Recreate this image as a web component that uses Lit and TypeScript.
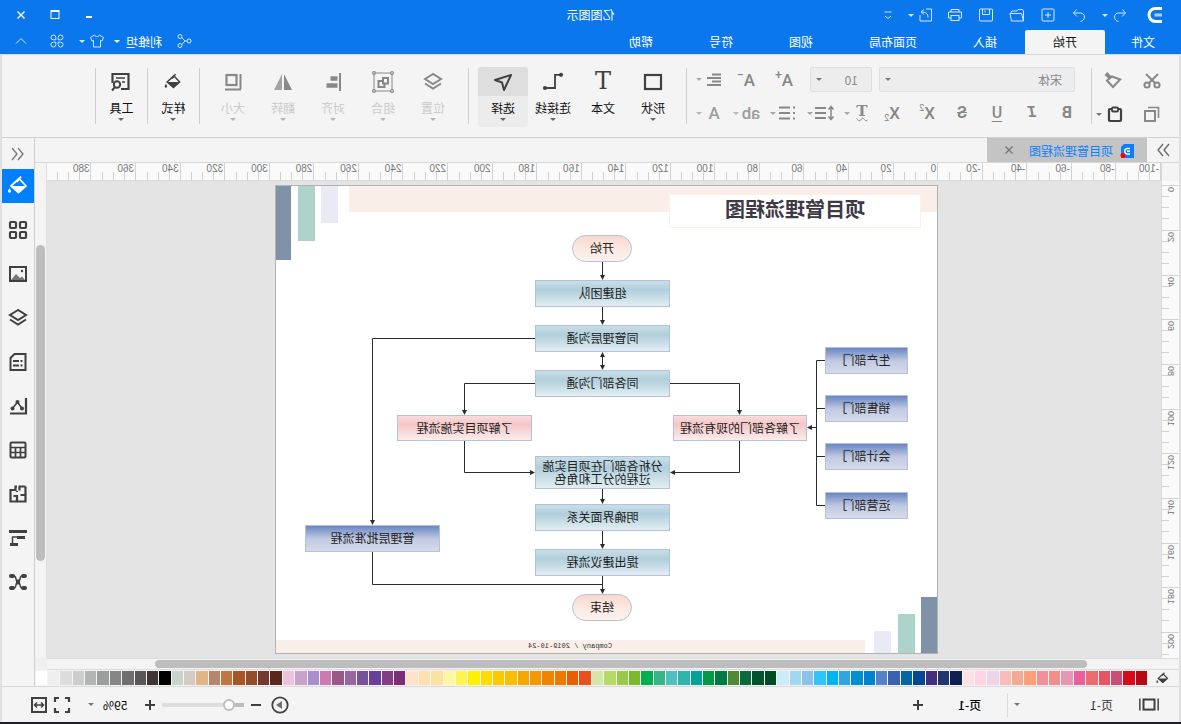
import { LitElement, html, css, svg, nothing } from "lit";
import { customElement, property, state } from "lit/decorators.js";
import { classMap } from "lit/directives/class-map.js";
import { styleMap } from "lit/directives/style-map.js";

const ICONS: Record<string, unknown> = {
  logo: svg`<path d="M1 1.5h6.5a6.5 6.5 0 0 1 0 13H1" fill="none" stroke="#fff" stroke-width="3"/><path d="M1 8h7.5" stroke="#a6cffa" stroke-width="3"/>`,
  undo: svg`<path d="M5.5 2.5 2.5 6l3.500 3.500M2.500 6h7c2.500 0 4 1.800 4 4s-1.500 4-4 4.500"/>`,
  redo: svg`<path d="M10.500 2.500 13.500 6l-3.500 3.500M13.500 6h-7c-2.500 0-4 1.800-4 4s1.500 4 4 4.500"/>`,
  fresh: svg`<rect x="2" y="2" width="12" height="12" rx="1"/><path d="M8 5v6M5 8h6"/>`,
  open: svg`<path d="M1.500 13.500V4l1-1.500h4.500l1 1.500h5l1 1v1.500"/><path d="M3.500 6.500h11.500l-1.500 7.500h-12z"/>`,
  save: svg`<rect x="1.500" y="2" width="13" height="12" rx="1"/><path d="M4.500 2v5.500h7V2M9 3.500v2"/>`,
  print: svg`<path d="M4 5V2.500h8V5M4 11H1.500V5h13v6H12"/><rect x="4" y="8.500" width="8" height="5"/>`,
  exportTo: svg`<path d="M8 2H2.500v12H14V8M6 10.500c0-4 2.500-5.500 6.500-5.500M10 2.500 13 5l-3 2.500"/>`,
  custom: svg`<path d="M4.500 5h7M5 9l3 2.500 3-2.500"/>`,
  min: svg`<path d="M5 10h6" stroke-width="2"/>`,
  max: svg`<rect x="4" y="3.500" width="8" height="8"/><path d="M4 4.500h8"/>`,
  close: svg`<path d="M4.500 4.500l7 7M11.500 4.500l-7 7" stroke-width="1.400"/>`,
  share: svg`<circle cx="3" cy="8" r="2"/><circle cx="12" cy="3.500" r="2"/><circle cx="12" cy="12.500" r="2"/><path d="M5 8h2l3.200-3.500M7 8l3.200 3.500"/>`,
  shirt: svg`<path d="M5.500 2 1.500 4.500 3 8l1.500-.5V14h7V7.500L13 8l1.500-3.500-4-2.500c-1 2-4 2-5 0z"/>`,
  apps: svg`<path d="M6.800 6.800V4.400a2.400 2.400 0 1 0-2.400 2.400zM9.200 6.800V4.400a2.400 2.400 0 1 1 2.400 2.400zM6.800 9.200v2.400a2.400 2.400 0 1 1-2.400-2.400zM9.200 9.200v2.400a2.400 2.400 0 1 0 2.400-2.400z"/>`,
  up: svg`<path d="M3 10.500l5-5 5 5"/>`,
  cut: svg`<g stroke-width="2"><circle cx="5" cy="14" r="2.600"/><circle cx="15" cy="14" r="2.600"/><path d="M4 3l9.500 9.500M16 3l-9.500 9.500"/></g>`,
  painter: svg`<path d="M13 6.500 4.800 9.500 12 17l6-6.500z" stroke-width="2"/><path d="M14.500 5.500l3-3.500 3 3-3.500 3 1 3.500-5.500-5.500z" fill="currentColor" stroke="none"/>`,
  copy: svg`<path d="M14 3.500H3.500V14" stroke-width="1.600"/><rect x="7" y="7" width="10" height="10" stroke-width="2"/>`,
  paste: svg`<rect x="4" y="5" width="12" height="12" rx="1" stroke-width="2.200"/><rect x="7" y="3.500" width="6" height="4" rx="1" stroke-width="1.800" fill="#f4f4f4"/>`,
  alignText: svg`<path d="M3 4.500h9M3 8h14M3 11.500h9M3 15h14" stroke-width="2"/>`,
  lineGap: svg`<path d="M9 5h11M9 10h11M9 15h11" stroke-width="2"/><path d="M4 4v12M1.500 6.500 4 3.500l2.500 3M1.500 13.500 4 16.500l2.500-3" stroke-width="1.500"/>`,
  bullets: svg`<path d="M8 4.500h11M8 10h11M8 15.500h11" stroke-width="2"/><path d="M3 4.500h2M3 10h2M3 15.500h2" stroke-width="2"/>`,
  shape: svg`<rect x="4" y="5" width="16" height="14" stroke-width="2.200"/>`,
  connector: svg`<path d="M20 4.800h-6V18H4" stroke-width="1.800" transform="matrix(-1 0 0 1 24 0)"/><circle cx="4" cy="4.800" r="2.100" fill="currentColor" stroke="none"/><circle cx="20" cy="18" r="2.100" fill="currentColor" stroke="none"/>`,
  pointer: svg`<path d="M4 5l16 5-7 2.500L11 20z" stroke-width="2" stroke-linejoin="round"/>`,
  layers: svg`<path d="M12 4l8 5-8 5-8-5zM4 13.500 12 18.500l8-5" stroke-width="2"/>`,
  group: svg`<rect x="3" y="3" width="18" height="18" stroke-width="1"/><path d="M12 8h5v5.500h-5zM12 11H7.500v6h6v-3.500" stroke-width="2" transform="matrix(-1 0 0 1 24 0)"/><g fill="#f4f4f4" stroke-width="1.200"><circle cx="3" cy="3" r="1.400"/><circle cx="21" cy="3" r="1.400"/><circle cx="3" cy="21" r="1.400"/><circle cx="21" cy="21" r="1.400"/></g>`,
  align: svg`<path d="M5 3v18" stroke-width="2"/><path d="M7.500 8.500h7M7.500 15.500h11" stroke-width="4.500"/>`,
  flip: svg`<path d="M11 4v16H3z" fill="currentColor" stroke="none"/><path d="M13 4v16h8z" fill="currentColor" stroke="none" opacity=".75"/>`,
  size: svg`<rect x="8.500" y="5" width="10" height="10" stroke-width="2.200"/><path d="M4.500 4v15M4 19.500h16" stroke-width="2"/>`,
  bucket: svg`<path d="M4 12 11 4.500 19 12l-7.500 6.500z" stroke-width="1.800"/><path d="M4 12h15l-7.500 7z" fill="currentColor" stroke="none"/><path d="M13 8 9 2.500" stroke-width="1.800"/><path d="M20.500 14l1.300 2.600a1.500 1.500 0 1 1-2.600 0z" fill="currentColor" stroke="none"/>`,
  tools: svg`<path d="M12 19H4.500V4h16v9" stroke-width="2.200"/><path d="M8 8h9M8 12h3" stroke-width="1.600"/><circle cx="16" cy="14.500" r="3.200" stroke-width="2"/><path d="M18 17l3 3.500" stroke-width="2"/>`,
  next: svg`<path d="M4 4l5 6-5 6M10 4l5 6-5 6" stroke-width="1.300"/>`,
  prev: svg`<path d="M10 4 5 10l5 6M16 4l-5 6 5 6" stroke-width="1.300"/>`,
  grid: svg`<g stroke-width="2.200"><rect x="4" y="4" width="6" height="6" rx="1"/><rect x="14" y="4" width="6" height="6" rx="1"/><rect x="4" y="14" width="6" height="6" rx="1"/><rect x="14" y="14" width="6" height="6" rx="1"/></g>`,
  image: svg`<rect x="4" y="5" width="16" height="14" stroke-width="2"/><path d="M5 18l3-3.500 2 1.500 4-4 5 6z" fill="#777" stroke="none"/><circle cx="8" cy="9" r="1.200" fill="currentColor" stroke="none"/>`,
  page: svg`<path d="M4.500 4h11L19.500 8v12h-15z" stroke-width="2"/><path d="M7.500 11h2M11 11h6M7.500 15.500h2M11 15.500h6" stroke-width="2"/>`,
  chart: svg`<path d="M4 4v15.500h16" stroke-width="2.200" /><path d="M8 14.500l4.500-6.500 5 6.500" stroke-width="1.500"/><g fill="currentColor" stroke="none"><circle cx="8" cy="14.500" r="2"/><circle cx="12.500" cy="8" r="2"/><circle cx="17.500" cy="14.500" r="2"/></g>`,
  table: svg`<rect x="4.500" y="4.500" width="15" height="15" rx="1" stroke-width="2"/><path d="M4 9.500h16M4 14.500h16M9.500 9v11M14.500 9v11" stroke-width="1.700"/>`,
  plan: svg`<path d="M4.500 4.500h6v4M4.500 4.500v15h15V8h-5V4.500h-1.500M4.500 13h5M13 19v-5h3.500M13 10v-1" stroke-width="2.200"/>`,
  gantt: svg`<path d="M3 5.500h18" stroke-width="3"/><path d="M5 11.500h8M12 18.500h8" stroke-width="3"/><path d="M12 11h5.500v7" stroke-width="1.500"/>`,
  mind: svg`<g fill="currentColor" stroke="none"><rect x="3" y="4" width="6" height="4" rx="2"/><rect x="15" y="4" width="6" height="4" rx="2"/><rect x="3" y="16" width="6" height="4" rx="2"/><rect x="15" y="16" width="6" height="4" rx="2"/><rect x="10" y="9.500" width="4" height="5"/></g><path d="M8 6c3 0 1 6 4 6s1-6 4-6M8 18c3 0 1-6 4-6s1 6 4 6" stroke-width="1.500"/>`,
  pages: svg`<rect x="6" y="6" width="12" height="11" stroke-width="2.200"/><path d="M2 5v13M22 5v13" stroke-width="1.600"/>`,
  plus: svg`<path d="M8 3v10M3 8h10" stroke-width="2"/>`,
  minus: svg`<path d="M3 8h10" stroke-width="2"/>`,
  present: svg`<circle cx="10" cy="10" r="7.700" stroke-width="1.800"/><path d="M8 6v8l6-4z" fill="#707070" stroke="none"/>`,
  full: svg`<path d="M3 7V3h4M13 3h4v4M17 13v4h-4M7 17H3v-4" stroke-width="2.200"/>`,
  fit: svg`<rect x="3" y="3" width="14" height="14" stroke-width="2"/><path d="M6 10h8M8 7.500 5.500 10 8 12.500M12 7.500l2.500 2.500-2.500 2.500" stroke-width="1.500"/>`,
  doc: svg`<path d="M1 1h10l3 3v11H1z" fill="#0a80ff" stroke="none"/><path d="M5 5.500h2.500a2.500 2.500 0 0 1 0 5.500H5M5 8.300h3" stroke="#fff" stroke-width="1.500"/><circle cx="12" cy="12.500" r="2.500" fill="#f00" stroke="none"/>`,
};

const icon = (name: string, size = 16, box = size) =>
  html`<svg width=${size} height=${size} viewBox="0 0 ${box} ${box}" fill="none" stroke="currentColor" aria-hidden="true">${ICONS[name]}</svg>`;
const caret = html`<i class="caret"></i>`;

const base = css`
  * { box-sizing: border-box; }
  :host { box-sizing: border-box; }
  button {
    display: inline-flex; align-items: center; justify-content: center;
    border: 0; padding: 0; margin: 0; background: none; color: inherit; font: inherit; white-space: nowrap;
  }
  svg { display: block; flex: none; }
  .caret {
    flex: none; width: 0; height: 0;
    border: 3px solid transparent; border-top-color: currentColor; border-bottom: 0;
  }
`;

@customElement("title-bar")
class TitleBar extends LitElement {
  @state() active = "开始";
  static styles = [base, css`
    :host { display: block; background: #0a78ec; color: #fff; font-size: 12px; }
    .top { display: grid; grid-template-columns: 1fr auto 1fr; align-items: center; height: 30px; padding-left: 18px; }
    .bottom { display: flex; align-items: center; justify-content: space-between; height: 24px; }
    .quick { display: flex; align-items: center; color: #d5e8fd; }
    .logo { margin-right: 17px; }
    .quick button { width: 31px; height: 24px; }
    .quick .split { width: 30px; gap: 4px; margin-right: 5px; }
    .quick .last { margin: 0 2px 0 4px; }
    .name { line-height: 30px; padding-right: 18px; }
    .window { display: flex; justify-content: flex-end; padding-right: 4px; }
    .window button { width: 34px; height: 28px; }
    .tabs { display: flex; height: 24px; }
    .tab { width: 80px; height: 24px; padding-bottom: 2px; border-radius: 2px 2px 0 0; }
    .first { width: 76px; }
    .wide { width: 104px; }
    .on { background: #f4f4f4; color: #111; }
    .user { display: flex; align-items: center; height: 24px; padding-bottom: 2px; color: #d5e8fd; }
    .account { gap: 6px; color: #fff; margin-left: 14px; }
    .theme { gap: 4px; margin: 0 14px 0 9px; }
    .collapse { margin: 0 13px 0 20px; }
  `];
  render() {
    const tabs = ["文件", "开始", "插入", "页面布局", "视图", "符号", "帮助"];
    return html`
      <div class="top">
        <div class="quick">
          <span class="logo">${icon("logo")}</span>
          <button class="split" aria-label="撤销">${icon("undo")}${caret}</button>
          <button aria-label="恢复">${icon("redo")}</button>
          <button aria-label="新建">${icon("fresh")}</button>
          <button aria-label="打开">${icon("open")}</button>
          <button aria-label="保存">${icon("save")}</button>
          <button aria-label="打印">${icon("print")}</button>
          <button class="split last" aria-label="导出">${icon("exportTo")}${caret}</button>
          <button aria-label="自定义">${icon("custom")}</button>
        </div>
        <div class="name">亿图图示</div>
        <div class="window">
          <button aria-label="最小化">${icon("min")}</button>
          <button aria-label="最大化">${icon("max")}</button>
          <button aria-label="关闭">${icon("close")}</button>
        </div>
      </div>
      <div class="bottom">
        <nav class="tabs">
          ${tabs.map((t, i) => html`<button
            class=${classMap({ tab: true, first: i === 0, wide: t.length > 2, on: t === this.active })}
            @click=${() => (this.active = t)}>${t}</button>`)}
        </nav>
        <div class="user">
          <button aria-label="分享">${icon("share")}</button>
          <button class="account">利维坦${caret}</button>
          <button class="theme" aria-label="主题">${icon("shirt")}${caret}</button>
          <button aria-label="应用">${icon("apps")}</button>
          <button class="collapse" aria-label="收起">${icon("up")}</button>
        </div>
      </div>`;
  }
}

@customElement("ribbon-bar")
class RibbonBar extends LitElement {
  static styles = [base, css`
    :host {
      display: flex; height: 84px; padding-left: 12px;
      border-top: 1px solid #d6d6d6; border-bottom: 1px solid #d0d0d0;
      background: #f4f4f4; color: #888; font-size: 12px;
    }
    .sep { flex: none; width: 1px; height: 56px; margin-top: 13px; background: #cfcfcf; }
    .clip { display: grid; grid-template: 25px 24px / 30px 33px; gap: 9px 12px; padding-top: 13px; }
    .clip button:nth-child(even) { justify-content: flex-start; }
    .paste { gap: 3px; color: #404040; }
    .font { display: flex; flex-direction: column; gap: 9px; padding: 12px 9px 0 14px; }
    .line { display: flex; align-items: center; height: 25px; }
    .line + .line { height: 24px; justify-content: space-between; }
    .pick { display: grid; align-items: center; color: #777; margin-left: 2px; }
    .pick select, .pick .caret { grid-area: 1 / 1; }
    .pick .caret { justify-self: end; margin-right: 6px; }
    .pick + .pick { margin: 0 16px 0 7px; }
    select {
      appearance: none; height: 25px; padding: 0 12px; font: inherit; color: #888;
      background: #ededed; border: 1px solid #dcdfe2; border-radius: 2px;
    }
    .family { width: 196px; }
    .pts { width: 62px; padding-left: 13px; }
    .b { width: 20px; height: 24px; font: 500 17px/24px Roboto, "Liberation Sans", sans-serif; }
    .styles { display: flex; gap: 15px; }
    .drops { display: flex; gap: 9px; }
    .split { width: 28px; height: 24px; gap: 2px; }
    .split .caret, .clip .caret { opacity: .7; }
    .ital { font: italic bold 16px/24px "Liberation Mono", monospace; }
    .bold, .strike { font-weight: bold; font-size: 16px; }
    .under { text-decoration: underline; text-underline-offset: 3px; font-size: 16px; }
    .strike { text-decoration: line-through; }
    .b small { font-size: 9px; line-height: 9px; font-weight: normal; }
    .b .high { align-self: flex-start; padding-top: 3px; }
    .b .low { align-self: flex-end; padding-bottom: 2px; }
    .scale { margin-right: 18px; }
    .scale small { font-size: 12px; font-weight: 500; }
    .scale + .scale { margin-right: 12px; }
    .serif { font: bold 15px/20px "DejaVu Serif", serif; text-decoration: underline wavy 1px; }
    .faint { opacity: .8; }
    .set { display: flex; padding: 12px 9px 0 8px; }
    .arrange { padding: 12px 8px 0 10px; }
    .tight { padding: 12px 0 0; }
    .big { flex-direction: column; justify-content: flex-start; width: 50px; height: 60px; color: #404040; border-radius: 3px; overflow: hidden; }
    .tight .big { width: 51px; }
    .face { display: flex; align-items: center; justify-content: center; width: 100%; height: 29px; }
    .label { line-height: 16px; margin: 4px 0 2px; color: #111; }
    .big .caret { color: #666; }
    .big:disabled { color: #888; }
    .big:disabled .label { color: #cacaca; }
    .big:disabled .caret { color: #b4b4b4; }
    .sel { background: #ececec; }
    .sel .face { background: #dedede; }
    .letter { font: 24px/29px "DejaVu Serif", serif; }
  `];
  big(name: string, label: string, o: { off?: boolean; sel?: boolean; drop?: boolean; size?: number } = {}) {
    return html`<button class=${classMap({ big: true, sel: !!o.sel })} ?disabled=${!!o.off}>
      <span class="face">${name === "T" ? html`<span class="letter">T</span>` : icon(name, o.size ?? 24, 24)}</span>
      <span class="label">${label}</span>${o.drop === false ? nothing : caret}
    </button>`;
  }
  render() {
    return html`
      <div class="clip">
        <button aria-label="剪切">${icon("cut", 20)}</button>
        <button aria-label="格式刷">${icon("painter", 22)}</button>
        <button aria-label="复制">${icon("copy", 20)}</button>
        <button class="paste" aria-label="粘贴">${icon("paste", 20)}${caret}</button>
      </div>
      <span class="sep"></span>
      <div class="font">
        <div class="line">
          <div class="pick"><select class="family" aria-label="字体"><option>宋体</option></select>${caret}</div>
          <div class="pick"><select class="pts" aria-label="字号"><option>10</option></select>${caret}</div>
          <button class="b scale" aria-label="增大字号">A<small class="high">+</small></button>
          <button class="b scale" aria-label="减小字号">A<small class="high">−</small></button>
          <button class="split" aria-label="对齐">${icon("alignText", 20)}${caret}</button>
        </div>
        <div class="line">
          <div class="styles">
            <button class="b bold">B</button>
            <button class="b ital">I</button>
            <button class="b under">U</button>
            <button class="b strike">S</button>
            <button class="b" aria-label="上标">X<small class="high">2</small></button>
            <button class="b" aria-label="下标">X<small class="low">2</small></button>
          </div>
          <div class="drops">
            <button class="split" aria-label="艺术字"><span class="b serif">T</span>${caret}</button>
            <button class="split" aria-label="行距">${icon("lineGap", 20)}${caret}</button>
            <button class="split" aria-label="项目符号">${icon("bullets", 20)}${caret}</button>
            <button class="split faint" aria-label="文字背景"><span class="b">ab</span>${caret}</button>
            <button class="split faint" aria-label="文字颜色"><span class="b">A</span>${caret}</button>
          </div>
        </div>
      </div>
      <span class="sep"></span>
      <div class="set">
        ${this.big("shape", "形状")}${this.big("T", "文本", { drop: false })}
        ${this.big("connector", "连接线")}${this.big("pointer", "选择", { sel: true })}
      </div>
      <span class="sep"></span>
      <div class="set arrange">
        ${[["layers", "位置"], ["group", "组合"], ["align", "对齐"], ["flip", "翻转"], ["size", "大小"]].map(
          ([n, l]) => this.big(n, l, { off: true }))}
      </div>
      <span class="sep"></span>
      <div class="set tight">${this.big("bucket", "样式", { size: 20 })}</div>
      <span class="sep"></span>
      <div class="set tight">${this.big("tools", "工具")}</div>
      <span class="sep"></span>`;
  }
}

@customElement("h-ruler")
class HRuler extends LitElement {
  static styles = css`
    * { box-sizing: border-box; }
    :host { box-sizing: border-box; display: flex; height: 18px; background: #fafafa; border-bottom: 1px solid #dadada; overflow: hidden; }
    .cell {
      flex: 1 1 0; min-width: 0; padding-left: 1px; border-left: 1px solid #d2d2d2;
      font: 10px/11px "Liberation Sans", sans-serif; color: #777;
      background: repeating-linear-gradient(90deg, transparent 0 10px, #d2d2d2 10px 11px) 0 100% / 34px 8px no-repeat;
    }
  `;
  render() {
    return Array.from({ length: 25 }, (_, i) => html`<span class="cell">${i * 20 - 100}</span>`);
  }
}

@customElement("v-ruler")
class VRuler extends LitElement {
  static styles = css`
    * { box-sizing: border-box; }
    :host { box-sizing: border-box; contain: size; display: flex; flex-direction: column; width: 18px; padding-top: 4px; background: #fafafa; border-right: 1px solid #dadada; overflow: hidden; }
    .cell {
      flex: 0 0 45px; border-top: 1px solid #d2d2d2; padding: 1px 0 0 3px;
      font: 9px/11px "Liberation Sans", sans-serif; color: #777;
      background: repeating-linear-gradient(180deg, transparent 0 10px, #d2d2d2 10px 11px) 100% 0 / 7px 34px no-repeat;
    }
    .cell:nth-child(3n) { flex-basis: 44px; }
    .num { display: block; height: max-content; width: 11px; line-height: 11px; writing-mode: vertical-rl; transform: rotate(180deg); }
  `;
  render() {
    return Array.from({ length: 11 }, (_, i) => html`<span class="cell"><span class="num">${i * 20}</span></span>`);
  }
}

type Shape = { t: string; x: number; y: number; w: number; h: number; k: string };
const SHAPES: Shape[] = [
  { t: "开始", x: 306, y: 50, w: 60, h: 27, k: "pill" },
  { t: "组建团队", x: 268, y: 95, w: 135, h: 27, k: "teal" },
  { t: "同管理层沟通", x: 268, y: 140, w: 135, h: 27, k: "teal" },
  { t: "同各部门沟通", x: 268, y: 185, w: 135, h: 27, k: "teal" },
  { t: "了解各部门的现有流程", x: 131, y: 230, w: 134, h: 26, k: "pink" },
  { t: "了解项目实施流程", x: 406, y: 230, w: 135, h: 26, k: "pink" },
  { t: "分析各部门在项目实施过程的分工和角色", x: 268, y: 271, w: 135, h: 33, k: "teal" },
  { t: "明确界面关系", x: 268, y: 319, w: 135, h: 27, k: "teal" },
  { t: "提出建议流程", x: 268, y: 364, w: 135, h: 27, k: "teal" },
  { t: "结束", x: 306, y: 409, w: 60, h: 27, k: "pill" },
  { t: "生产部门", x: 30, y: 162, w: 83, h: 27, k: "blue" },
  { t: "销售部门", x: 30, y: 210, w: 83, h: 27, k: "blue" },
  { t: "会计部门", x: 30, y: 258, w: 83, h: 27, k: "blue" },
  { t: "运营部门", x: 30, y: 307, w: 83, h: 27, k: "blue" },
  { t: "管理层批准流程", x: 498, y: 340, w: 135, h: 27, k: "blue" },
];
const LINKS = [
  "M335.5 77V92", "M335.5 122V137", "M335.5 304V316", "M335.5 346V361", "M335.5 391V406",
  "M403 198.5H473.5V227", "M268 198.5H198.5V227", "M198.5 256V287.5H265", "M473.5 256V287.5H406",
  "M403 153.5H565.5V337", "M121.5 242.5H128",
];

@customElement("flow-page")
class FlowPage extends LitElement {
  static styles = css`
    * { box-sizing: border-box; }
    :host { box-sizing: border-box; display: block; position: relative; width: 663px; height: 469px; background: #fff; border: 1px solid #b2b2b2; overflow: hidden; }
    .art { position: absolute; inset: -1px; }
    .art svg { position: absolute; inset: 0; }
    .band { position: absolute; background: #faeee9; }
    .head { left: 0; top: 1px; width: 589px; height: 26px; }
    .foot { left: 73px; bottom: 0; width: 590px; height: 14px; text-align: center; font: 7px/13px "Liberation Mono", monospace; color: #333; }
    .bar { position: absolute; width: 17px; }
    .title {
      position: absolute; left: 17px; top: 9px; width: 252px; height: 34px; margin: 0; text-align: center;
      background: #fff; border: 1px solid #fdf1e6; color: #3d3a45; font-size: 20px; line-height: 28px; font-weight: 700;
    }
    .node {
      position: absolute; display: flex; align-items: center; justify-content: center; text-align: center;
      padding: 0 6px 2px; border: 1px solid #b6c0dd; font-size: 12px; line-height: 13px; color: #222;
    }
    .teal { background: linear-gradient(#c9dee6, #b0cfdb 35%, #e2eef2); }
    .pink { background: linear-gradient(#f9dcdc, #f5c6c6 35%, #fcecec); }
    .blue { background: linear-gradient(#6887c4, #c2cae2 52%, #d5dbeb); }
    .pill { background: linear-gradient(#f8d8cc, #fbeae3 55%, #fcf2ee); border-radius: 14px; }
  `;
  render() {
    const bars = [
      { left: 600, top: 1, height: 37, background: "#e8ebf5" },
      { left: 623, top: 1, height: 55, background: "#add3ca" },
      { left: 647, top: 1, height: 74, background: "#7f92a8" },
      { left: 0, top: 412, height: 57, background: "#7f92a8" },
      { left: 23, top: 429, height: 40, background: "#add3ca" },
      { left: 47, top: 446, height: 23, background: "#e8ebf5" },
    ];
    return html`<div class="art">
      <div class="band head"></div>
      ${bars.map((b) => html`<div class="bar" style=${styleMap({ left: b.left + "px", top: b.top + "px", height: b.height + "px", background: b.background })}></div>`)}
      <div class="band foot">Company / 2019-10-24</div>
      <h1 class="title">项目管理流程图</h1>
      <svg width="663" height="469" fill="none" stroke="#2b2b2b" aria-hidden="true">
        <defs><marker id="tip" markerWidth="6" markerHeight="6" refX="2" refY="2.5" orient="auto-start-reverse" markerUnits="userSpaceOnUse">
          <path d="M0 0L5 2.500L0 5z" fill="#2b2b2b" stroke="none"/></marker></defs>
        ${LINKS.map((d) => svg`<path d=${d} marker-end="url(#tip)"/>`)}
        <path d="M335.5 170V182" marker-start="url(#tip)" marker-end="url(#tip)"/>
        <path d="M565.5 367V399.5H335.5"/>
        <path d="M113 175.5H121.5V320.5H113M113 223.5H121.5M113 271.5H121.5"/>
      </svg>
      ${SHAPES.map((n) => html`<div class="node ${n.k}" style=${styleMap({ left: n.x + "px", top: n.y + "px", width: n.w + "px", height: n.h + "px" })}>${n.t}</div>`)}
    </div>`;
  }
}

const PALETTE = (
  "b50a14 d90a1b c94f78 e95465 ec6d70 e85f9c e397b5 f08f87 f1909a ff9f78 f2aa92 f6bdb9 ecd5e8 ffd5e5 ffe0e3 " +
  "0f204d 22376f 432f7c 04498f 0467a4 3d60b0 5582c6 0082d0 0090d0 2ea7e0 00b4ef 2fc5fa 8bc1eb a0d8ef ccebf6 " +
  "004d25 00552e 0b6b3a 4f8a35 007b43 009944 00a497 2fb5ac 4fbfc0 38b48b 00b050 7cb82f 99c94a b8d86a d3e8a8 " +
  "e8501e e95f00 ee7800 f08300 f39800 f5a800 fabe00 fcc800 ffdc00 fff000 fff450 fff8a0 fce2a0 ffdfb0 ffe3c8 " +
  "7c2e74 833d83 67409a 74539a 95669f 9b5787 cc7bb0 a78fd0 c8a2c8 ecc3dc 57281b 733a2f 934d2a a85426 c07640 " +
  "b4866b dfb786 d4cac4 c9d4ca 000000 3e3535 595757 6f6f6f 868686 9c9d9d b2b5b4 cdcdcd dcdcdc efefef ffffff"
).split(" ");

@customElement("work-area")
class WorkArea extends LitElement {
  static styles = [base, css`
    :host { display: flex; flex-direction: column; min-width: 0; background: #f4f4f4; font-size: 12px; }
    .docs { display: flex; height: 25px; border-bottom: 1px solid #d8d8d8; color: #666; }
    .expand { width: 32px; }
    .doc { display: flex; align-items: center; width: 160px; padding: 0 14px 0 12px; background: #c4c4c4; color: #0a80ff; }
    .doc a { color: inherit; text-decoration: none; margin-left: 7px; flex: 1; }
    .doc button { color: #777; }
    .view { flex: 1; display: grid; grid-template: 18px minmax(0, 1fr) 12px / 18px 1fr 12px; }
    .corner { background: #f0f0f0; }
    .edge { border-right: 1px solid #dadada; }
    .canvas { background: #e4e4e4; padding: 4px 0 4px 223px; overflow: hidden; }
    .vbar { grid-row: 1 / 3; grid-column: 3; padding: 82px 1px 97px; border-left: 1px solid #e0e0e0; display: flex; }
    .hbar { grid-column: 1 / 3; padding: 1px 108px 1px 92px; border-top: 1px solid #dcdcdc; border-bottom: 1px solid #dcdcdc; display: flex; }
    .thumb { flex: 1; background: #bdbdbd; border-radius: 5px; }
    .colors { display: flex; height: 17px; align-items: center; border-bottom: 1px solid #d8d8d8; color: #404040; }
    .drip { width: 32px; }
    .swatches { flex: 1; display: flex; gap: 1px; padding-right: 1px; }
    .swatch { flex: 1 1 0; min-width: 0; height: 14px; }
  `];
  render() {
    return html`
      <div class="docs">
        <button class="expand" aria-label="展开">${icon("next", 20)}</button>
        <div class="doc">${icon("doc", 15)}<a href="#doc">项目管理流程图</a><button aria-label="关闭文档">${icon("close")}</button></div>
      </div>
      <div class="view">
        <span class="edge"></span><h-ruler></h-ruler>
        <v-ruler></v-ruler>
        <div class="canvas"><flow-page></flow-page></div>
        <div class="vbar"><span class="thumb"></span></div>
        <div class="hbar"><span class="thumb"></span></div>
        <span class="corner"></span>
      </div>
      <div class="colors">
        <button class="drip" aria-label="填充">${icon("bucket", 15, 24)}</button>
        <div class="swatches">${PALETTE.map((c) => html`<button class="swatch" aria-label="#${c}" style=${styleMap({ background: "#" + c })}></button>`)}</div>
      </div>`;
  }
}

@customElement("side-panel")
class SidePanel extends LitElement {
  @state() active = 0;
  static styles = [base, css`
    :host { display: flex; flex-direction: column; align-items: stretch; gap: 10px; width: 33px; border-left: 1px solid #cfcfcf; border-bottom: 1px solid #d8d8d8; background: #f4f4f4; color: #404040; }
    button { height: 34px; }
    .fold { height: 31px; margin-bottom: -10px; color: #777; }
    .on { background: #0080ff; color: #fff; }
  `];
  render() {
    const names = ["bucket", "grid", "image", "layers", "page", "chart", "table", "plan", "gantt", "mind"];
    const labels = ["填充", "符号库", "图片", "图层", "备注", "图表", "表格", "平面图", "甘特图", "思维导图"];
    return html`<button class="fold" aria-label="折叠">${icon("prev", 20)}</button>
      ${names.map((n, i) => html`<button class=${classMap({ on: i === this.active })} aria-label=${labels[i]} @click=${() => (this.active = i)}>${icon(n, 24)}</button>`)}`;
  }
}

@customElement("status-bar")
class StatusBar extends LitElement {
  @property({ type: Number }) zoom = 13;
  static styles = [base, css`
    :host { display: flex; align-items: center; justify-content: space-between; height: 35px; background: #f4f4f4; color: #404040; font-size: 12px; }
    .left, .right { display: flex; align-items: center; height: 35px; }
    .left { padding-left: 19px; }
    .pages { gap: 70px; margin-left: 25px; color: #333; }
    .pages .caret { color: #777; }
    .sep { width: 1px; height: 24px; margin-left: 6px; background: #dadada; }
    .current { margin: 0 32px 0 26px; color: #000; font-weight: 500; }
    .right { padding-right: 27px; }
    .minus { margin: 0 4px 0 6px; }
    input {
      appearance: none; width: 82px; height: 12px; margin: 0; border-radius: 2px;
      background: linear-gradient(90deg, #bdbdbd 15px, #dedede 15px) 0 50% / 100% 4px no-repeat;
    }
    input::-webkit-slider-thumb { appearance: none; width: 12px; height: 12px; box-sizing: border-box; border: 2px solid #bdbdbd; border-radius: 50%; background: #fff; }
    .plus { margin: 0 15px 0 4px; }
    .zoom { gap: 9px; color: #000; margin-right: 16px; }
    .zoom .caret { color: #777; }
    .full { margin-right: 3px; }
  `];
  render() {
    return html`
      <div class="left">
        <button aria-label="页面视图">${icon("pages", 22, 24)}</button>
        <button class="pages">页-1${caret}</button>
        <span class="sep"></span>
        <button class="current">页-1</button>
        <button aria-label="新建页">${icon("plus")}</button>
      </div>
      <div class="right">
        <button aria-label="演示">${icon("present", 20)}</button>
        <button class="minus" aria-label="缩小">${icon("minus")}</button>
        <input type="range" aria-label="缩放" min="0" max="100" .value=${String(this.zoom)} />
        <button class="plus" aria-label="放大">${icon("plus")}</button>
        <button class="zoom">59%${caret}</button>
        <button class="full" aria-label="全屏">${icon("full", 20)}</button>
        <button aria-label="适应宽度">${icon("fit", 20)}</button>
      </div>`;
  }
}

@customElement("app-root")
class AppRoot extends LitElement {
  static styles = css`
    * { box-sizing: border-box; }
    :host {
      display: flex; flex-direction: column; min-height: 100vh; overflow: hidden; box-sizing: border-box;
      border-bottom: 2px solid #202024; background: #f4f4f4; transform: scaleX(-1);
      font-family: "Noto Sans CJK SC", "Liberation Sans", sans-serif;
    }
    .frame { flex: 1; display: flex; flex-direction: column; border: solid #e0e0e0; border-width: 0 2px; }
    .middle { flex: 1; display: grid; grid-template-columns: minmax(0, 1fr) auto; }
  `;
  render() {
    return html`
      <title-bar></title-bar>
      <div class="frame">
        <ribbon-bar></ribbon-bar>
        <div class="middle"><work-area></work-area><side-panel></side-panel></div>
        <status-bar></status-bar>
      </div>`;
  }
}
